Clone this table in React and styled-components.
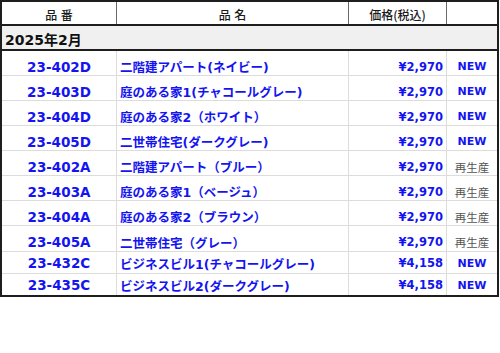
import React from "react";
import styled, { createGlobalStyle } from "styled-components";

const Global = createGlobalStyle`
  html, body { margin: 0; padding: 0; background: #fff; }
  body { font-family: "DejaVu Sans", "Noto Sans CJK JP", sans-serif; }
`;

const BLUE = "#1414f0";

const Table = styled.div`
  width: 499px;
  box-sizing: border-box;
  border: 2px solid #1e1e1e;
  display: flex;
  flex-direction: column;
`;

const Row = styled.div`
  display: grid;
  grid-template-columns: 115px 232px 98px 50px;
  height: ${(p) => p.$h}px;
  box-sizing: border-box;
  border-bottom: ${(p) => p.$border || "none"};
`;

const Cell = styled.div`
  display: flex;
  align-items: center;
  justify-content: ${(p) => p.$justify || "center"};
  box-sizing: border-box;
  padding-top: ${(p) => p.$pt || 0}px;
  padding-left: ${(p) => p.$pl || 0}px;
  padding-right: ${(p) => p.$pr || 0}px;
  border-right: ${(p) => (p.$last ? "none" : `1px solid ${p.$sep || "#dcdcdc"}`)};
  white-space: nowrap;
  overflow: hidden;
`;

const HeadText = styled.span`
  font-family: "Noto Sans CJK JP", sans-serif;
  font-size: 12px;
  font-weight: 500;
  color: #1a1a1a;
  word-spacing: ${(p) => p.$ws || 0}px;
`;

const Section = styled.div`
  height: 25px;
  box-sizing: border-box;
  background: #f0f0f0;
  border-bottom: 2px solid #1e1e1e;
  display: flex;
  align-items: center;
  padding-left: 3px;
  padding-top: 2px;
  font-family: "DejaVu Sans", "Noto Sans CJK JP", sans-serif;
  font-weight: bold;
  font-size: 14px;
  color: #111;
`;

const Code = styled.span`
  font-family: "DejaVu Sans", sans-serif;
  font-weight: bold;
  font-size: 13.5px;
  color: ${BLUE};
`;

const Name = styled.span`
  font-family: "DejaVu Sans", "Noto Sans CJK JP", sans-serif;
  font-weight: bold;
  font-size: 12.5px;
  color: ${BLUE};
`;

const Price = styled.span`
  font-family: "DejaVu Sans", sans-serif;
  font-weight: bold;
  font-size: 11.5px;
  color: ${BLUE};
`;

const Badge = styled.span`
  font-family: ${(p) => (p.$new ? `"DejaVu Sans", sans-serif` : `"Noto Sans CJK JP", sans-serif`)};
  font-weight: ${(p) => (p.$new ? "bold" : "normal")};
  font-size: ${(p) => (p.$new ? "11px" : "11.5px")};
  color: ${(p) => (p.$new ? BLUE : "#555")};
`;

const items = [
  ["23-402D", "二階建アパート(ネイビー)", "¥2,970", true],
  ["23-403D", "庭のある家1(チャコールグレー)", "¥2,970", true],
  ["23-404D", "庭のある家2（ホワイト）", "¥2,970", true],
  ["23-405D", "二世帯住宅(ダークグレー)", "¥2,970", true],
  ["23-402A", "二階建アパート（ブルー）", "¥2,970", false],
  ["23-403A", "庭のある家1（ベージュ）", "¥2,970", false],
  ["23-404A", "庭のある家2（ブラウン）", "¥2,970", false],
  ["23-405A", "二世帯住宅（グレー）", "¥2,970", false],
  ["23-432C", "ビジネスビル1(チャコールグレー)", "¥4,158", true],
  ["23-435C", "ビジネスビル2(ダークグレー)", "¥4,158", true],
];

const heights = [25, 25, 25, 25, 25, 25, 25, 26, 22, 21];
const pads = [7, 7, 7, 7, 7, 7, 7, 7, 1, 1];

export default function App() {
  return (
    <>
      <Global />
      <Table>
        <Row $h={24} $border="2px solid #1e1e1e">
          <Cell $sep="#6a6a6a" $pt={3}>
            <HeadText $ws={1}>品 番</HeadText>
          </Cell>
          <Cell $sep="#6a6a6a" $pt={3}>
            <HeadText $ws={1}>品 名</HeadText>
          </Cell>
          <Cell $sep="#6a6a6a" $pt={3}>
            <HeadText>価格(税込)</HeadText>
          </Cell>
          <Cell $last />
        </Row>
        <Section>2025年2月</Section>
        {items.map(([code, name, price, isNew], i) => (
          <Row
            key={code}
            $h={heights[i]}
            $border={i < items.length - 1 ? "1px solid #dcdcdc" : "none"}
          >
            <Cell $pt={pads[i]}>
              <Code>{code}</Code>
            </Cell>
            <Cell $pt={pads[i]} $justify="flex-start" $pl={3}>
              <Name>{name}</Name>
            </Cell>
            <Cell $pt={pads[i]} $justify="flex-end" $pr={3}>
              <Price>{price}</Price>
            </Cell>
            <Cell $pt={pads[i]} $last>
              <Badge $new={isNew}>{isNew ? "NEW" : "再生産"}</Badge>
            </Cell>
          </Row>
        ))}
      </Table>
    </>
  );
}
